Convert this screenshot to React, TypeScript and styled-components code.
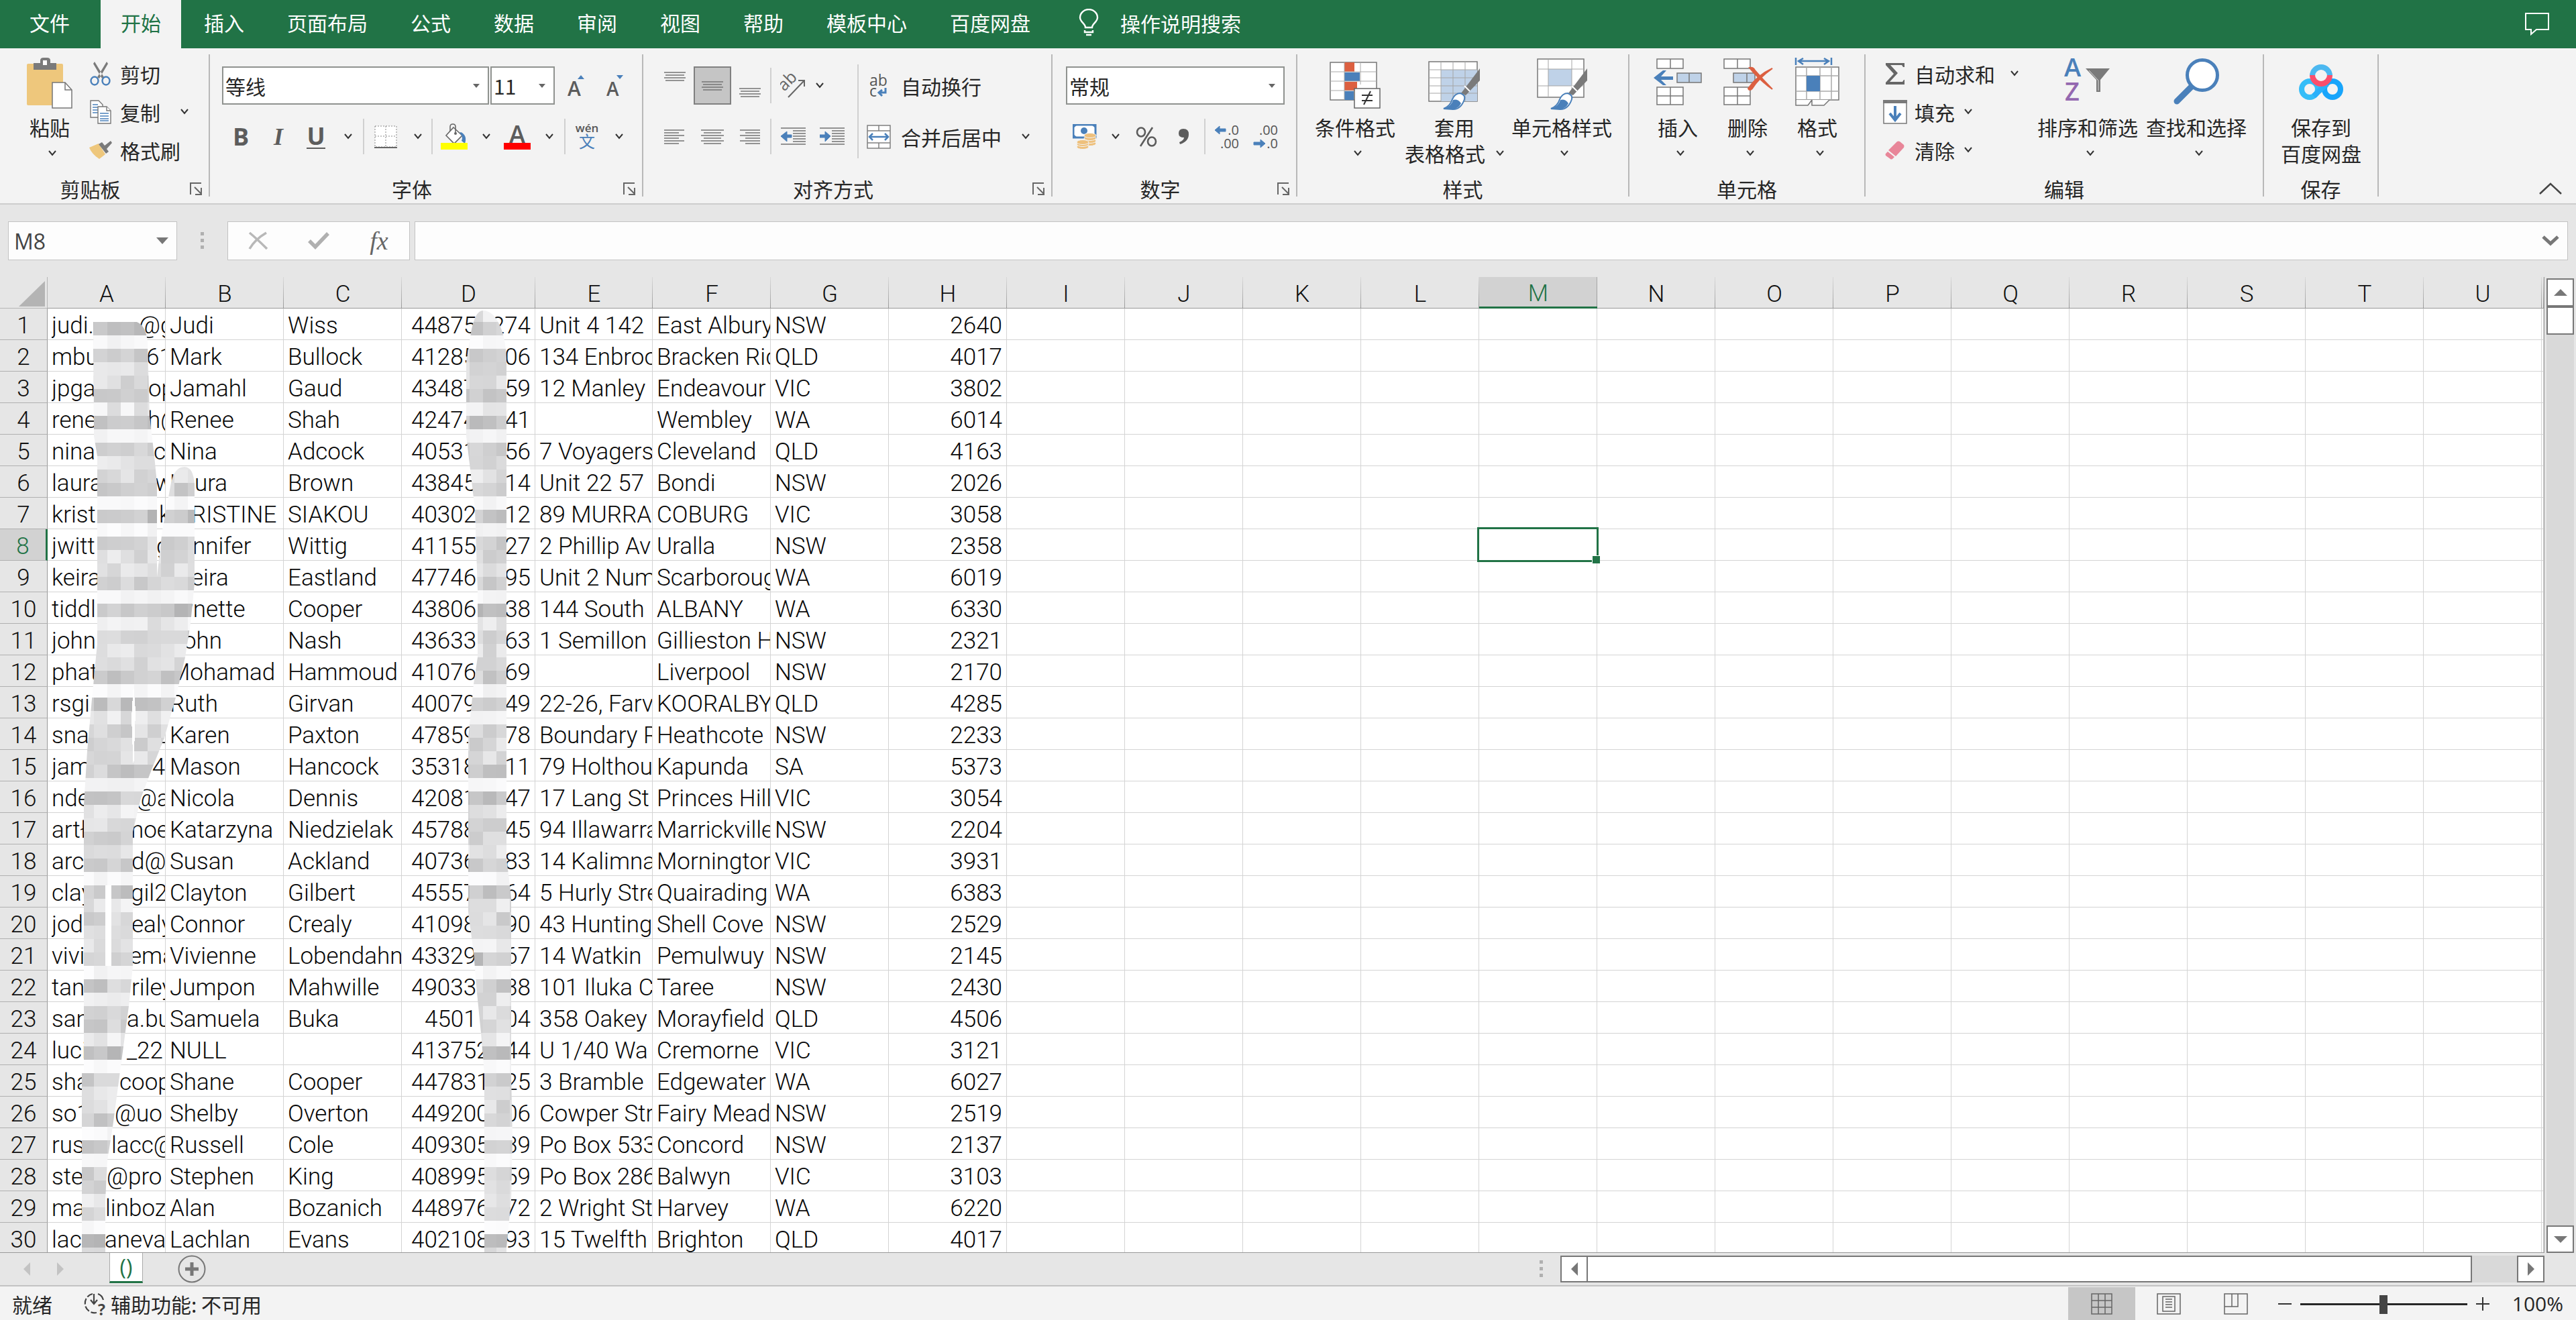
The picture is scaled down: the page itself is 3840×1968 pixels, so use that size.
import React from 'react';
import styled, { createGlobalStyle, css } from 'styled-components';

const GREEN = '#217346';
const BLUE = '#4a80ba';
const GRAY = '#737373';
const UI = '"Noto Sans CJK SC", "Noto Sans", sans-serif';
const SHEET = 'Roboto, "Noto Sans CJK SC", sans-serif';

const GlobalStyle = createGlobalStyle`
  * { box-sizing: border-box; }
  body { margin: 0; background: #e6e6e6; overflow: hidden; }
  button, input, select { font: inherit; color: inherit; border: 0; padding: 0; margin: 0; background: none; }
  svg { display: block; flex: none; }
`;

const Page = styled.div`
  display: flex;
  flex-direction: column;
  height: 100vh;
  font: 30px/40px ${UI};
  color: #262626;
  background: #e6e6e6;
`;

/* ---------- tab strip ---------- */
const TabStrip = styled.nav`
  display: flex;
  flex: none;
  height: 72px;
  background: ${GREEN};
  color: #fff;
`;
const Tab = styled.button<{ $active?: boolean; $wide?: boolean }>`
  padding: 0 ${(p) => (p.$wide ? 44 : 32)}px 6px;
  white-space: nowrap;
  ${(p) => p.$active && css`
    margin: 0 2px;
    padding: 0 30px 6px;
    background: #f3f3f3;
    color: ${GREEN};
  `}
`;
const TellMe = styled.button`
  display: flex;
  align-items: center;
  gap: 32px;
  margin-left: 40px;
  padding-bottom: 4px;
`;
const CommentButton = styled.button`
  margin-left: auto;
  padding: 0 40px;
`;

/* ---------- ribbon ---------- */
const Ribbon = styled.div`
  display: flex;
  flex: none;
  height: 233px;
  padding: 9px 0 10px;
  background: #f3f3f3;
  border-bottom: 2px solid #cdcdcd;
`;
const Group = styled.section<{ $w: number }>`
  display: flex;
  flex-direction: column;
  flex: none;
  width: ${(p) => p.$w}px;
  border-right: 2px solid #b8b8b8;
`;
const GroupBody = styled.div<{ $pad?: number }>`
  display: flex;
  flex: 1;
  min-height: 0;
  padding-left: ${(p) => p.$pad ?? 0}px;
`;
const GroupFooter = styled.div`
  display: flex;
  height: 24px;
  line-height: 24px;
`;
const GroupName = styled.span`
  flex: 1;
  text-align: center;
`;
const Launcher = styled.button`
  width: 42px;
  padding-left: 14px;
`;
const BigButton = styled.button<{ $w: number }>`
  display: flex;
  flex-direction: column;
  align-items: center;
  width: ${(p) => p.$w}px;
  height: 173px;
  padding-top: 5px;
  line-height: 39px;
  white-space: nowrap;
`;
const BigIcon = styled.span`
  display: flex;
  justify-content: center;
  height: 84px;
`;
const Line = styled.span<{ $lone?: boolean }>`
  display: flex;
  align-items: center;
  justify-content: center;
  gap: 16px;
  height: 39px;
  padding-left: ${(p) => (p.$lone ? 8 : 0)}px;
`;
const Stack = styled.div`
  display: flex;
  flex-direction: column;
`;
const SmallRow = styled.div`
  display: flex;
  align-items: center;
  height: 57px;
`;
const SmallButton = styled.button`
  display: flex;
  align-items: center;
  gap: 5px;
  white-space: nowrap;
`;
const IconSlot = styled.span<{ $w: number }>`
  display: flex;
  justify-content: center;
  width: ${(p) => p.$w}px;
`;
const Controls = styled.div<{ $w?: number }>`
  display: flex;
  flex-direction: column;
  gap: 19px;
  padding-top: 18px;
  width: ${(p) => (p.$w ? `${p.$w}px` : 'auto')};
`;
const EditColumn = styled(Stack)`
  width: 230px;
`;
const ToolRow = styled.div`
  display: flex;
  align-items: center;
  height: 57px;
`;
const Tool = styled.button<{ $w?: number; $on?: boolean }>`
  display: flex;
  align-items: center;
  justify-content: center;
  width: ${(p) => p.$w ?? 56}px;
  height: 57px;
  ${(p) => p.$on && css`
    background: #c5c5c5;
    border: 2px solid #808080;
  `}
`;
const Divider = styled.span<{ $tall?: boolean }>`
  flex: none;
  width: 2px;
  height: ${(p) => (p.$tall ? 140 : 53)}px;
  margin: ${(p) => (p.$tall ? '15px 2px 0' : '0 2px')};
  background: #d0d0d0;
`;
const ComboBox = styled.label<{ $w: number }>`
  display: flex;
  align-items: center;
  width: ${(p) => p.$w}px;
  height: 57px;
  margin-right: 2px;
  padding: 0 12px 0 3px;
  background: #fff;
  border: 2px solid #8f928f;
  select {
    flex: 1;
    min-width: 0;
    height: 53px;
    appearance: none;
    outline: 0;
  }
`;
const Glyph = styled.span<{ $serif?: boolean; $line?: boolean }>`
  font: ${(p) => (p.$serif ? 'italic' : 'normal')} 700 36px/40px ${(p) => (p.$serif ? '"Liberation Serif", serif' : '"Open Sans", sans-serif')};
  color: #5c5c5c;
  border-bottom: ${(p) => (p.$line ? '2px solid #5c5c5c' : '0')};
  line-height: ${(p) => (p.$line ? 34 : 40)}px;
`;
const CollapseButton = styled.button`
  align-self: flex-end;
  margin-left: auto;
  padding: 0 20px 2px;
`;

/* ---------- formula bar ---------- */
const FormulaBar = styled.div`
  display: flex;
  flex: none;
  height: 108px;
  padding: 25px 12px 25px;
`;
const Field = styled.div<{ $w?: number }>`
  display: flex;
  align-items: center;
  flex: ${(p) => (p.$w ? 'none' : '1')};
  width: ${(p) => (p.$w ? `${p.$w}px` : 'auto')};
  min-width: 0;
  background: #fdfdfd;
  border: 1px solid #c3c3c3;
  input {
    flex: 1;
    min-width: 0;
    height: 54px;
    padding-left: 8px;
    font: 32px/40px "Open Sans", sans-serif;
    color: #444;
    outline: 0;
  }
  button { padding: 0 12px; }
`;
const FxButtons = styled(Field)`
  margin-right: 7px;
  button {
    display: flex;
    justify-content: center;
    width: 90px;
    padding: 0;
  }
`;
const FxGlyph = styled.span`
  font: italic 38px/40px "Liberation Serif", serif;
  color: #666;
`;
const Grip = styled.span<{ $w: number }>`
  display: flex;
  justify-content: center;
  align-items: center;
  flex: none;
  width: ${(p) => p.$w}px;
`;

/* ---------- sheet ---------- */
const SheetArea = styled.div`
  display: flex;
  flex: 1;
  min-height: 0;
`;
const GridFrame = styled.div`
  position: relative;
  flex: 1;
  min-width: 0;
  overflow: hidden;
  border-right: 1px solid #999;
  border-bottom: 1px solid #999;
`;
const Grid = styled.table`
  width: 100%;
  table-layout: fixed;
  border-collapse: separate;
  border-spacing: 0;
  font: 35px/40px ${SHEET};
  color: #080808;
`;
const ColHead = styled.th<{ $on?: boolean }>`
  height: 47px;
  padding: 5px 0 0;
  font-weight: 300;
  line-height: 39px;
  color: ${(p) => (p.$on ? GREEN : '#111')};
  border-bottom: ${(p) => (p.$on ? `3px solid ${GREEN}` : '1px solid #999')};
  background: linear-gradient(${(p) => (p.$on ? '#aaa, #999' : '#dadada, #999')}) right / 1px 100% no-repeat ${(p) => (p.$on ? '#d2d2d2' : '#e6e6e6')};
`;
const Corner = styled.th`
  padding: 0;
  border-right: 1px solid #b5b5b5;
  border-bottom: 1px solid #b5b5b5;
  background: #e6e6e6;
  svg { margin: 4px 0 0 28px; }
`;
const RowHead = styled.th<{ $on?: boolean }>`
  height: 47px;
  padding: 5px 0 0;
  font-weight: 300;
  color: ${(p) => (p.$on ? GREEN : '#111')};
  background: ${(p) => (p.$on ? '#d2d2d2' : '#e6e6e6')};
  border-right: ${(p) => (p.$on ? `3px solid ${GREEN}` : '1px solid #999')};
  border-bottom: 1px solid #b0b0b0;
`;
const Cell = styled.td<{ $num?: boolean }>`
  height: 47px;
  padding: 5px 6px 0;
  overflow: hidden;
  white-space: pre;
  font-weight: 300;
  text-align: ${(p) => (p.$num ? 'right' : 'left')};
  background: #fff;
  border-right: 1px solid #d4d4d4;
  border-bottom: 1px solid #d4d4d4;
`;
const Split = styled.div`
  display: flex;
  overflow: hidden;
  margin-right: -6px;
`;
const Head = styled.span`
  flex: none;
  overflow: hidden;
`;
const Phone = styled.div<{ $short?: boolean }>`
  display: flex;
  justify-content: space-between;
  width: ${(p) => (p.$short ? 158 : 178)}px;
  margin-left: auto;
`;
const ActiveCell = styled.td`
  position: relative;
  height: 47px;
  padding: 0;
  background: #fff;
  border-right: 1px solid #d4d4d4;
  border-bottom: 1px solid #d4d4d4;
  &::before {
    content: '';
    position: absolute;
    inset: -3px;
    border: 3px solid ${GREEN};
  }
  &::after {
    content: '';
    position: absolute;
    right: -5px;
    bottom: -5px;
    width: 11px;
    height: 11px;
    background: ${GREEN};
    border: solid #fff;
    border-width: 1px 0 0 1px;
  }
`;
const Mosaic = styled.svg`
  position: absolute;
  left: 0;
  top: 47px;
`;
const VScroll = styled.div`
  display: flex;
  flex-direction: column;
  flex: none;
  width: 47px;
  padding: 2px 3px 0;
`;
const VTrack = styled.div`
  flex: 1;
  background: #d9d9d9;
`;
const ScrollKey = styled.button<{ $w: number; $h: number }>`
  display: flex;
  align-items: center;
  justify-content: center;
  flex: none;
  width: ${(p) => p.$w}px;
  height: ${(p) => p.$h}px;
  background: #fff;
  border: 2px solid #777;
`;
const SheetBar = styled.div`
  display: flex;
  align-items: center;
  flex: none;
  height: 50px;
  padding: 0 47px 0 15px;
  border-bottom: 2px solid #c3c3c3;
`;
const NavArrow = styled.button`
  display: flex;
  justify-content: center;
  width: 50px;
`;
const SheetTab = styled.button`
  align-self: flex-start;
  width: 50px;
  height: 45px;
  margin: 0 48px;
  background: #fff;
  color: ${GREEN};
  font: 32px/38px "Open Sans", sans-serif;
  border: 1px solid #aaa;
  border-width: 0 1px 3px;
  border-bottom-color: ${GREEN};
`;
const HScroll = styled.div`
  display: flex;
  flex: none;
  width: 1467px;
  height: 40px;
  background: #d9d9d9;
`;
const HThumb = styled.div`
  flex: 1;
  margin: 0 67px 0 -2px;
  background: #fff;
  border: 2px solid #777;
`;
const Spacer = styled.div`
  flex: 1;
`;
const StatusBar = styled.footer`
  display: flex;
  align-items: center;
  flex: none;
  height: 50px;
  padding: 2px 19px 0 18px;
  background: #f3f3f3;
  white-space: nowrap;
`;
const Access = styled.button`
  display: flex;
  align-items: center;
  gap: 4px;
  margin-left: 47px;
`;
const ViewButton = styled.button<{ $on?: boolean }>`
  display: flex;
  align-items: center;
  justify-content: center;
  width: 100px;
  height: 50px;
  background: ${(p) => (p.$on ? '#c6c6c6' : 'transparent')};
`;
const ZoomRange = styled.input`
  width: 249px;
  height: 30px;
  appearance: none;
  &::-webkit-slider-runnable-track { height: 3px; background: #262626; }
  &::-webkit-slider-thumb {
    appearance: none;
    width: 12px;
    height: 28px;
    margin-top: -12px;
    background: #444;
  }
`;
const Percent = styled.span`
  margin-left: 21px;
  font: 30px/40px "Open Sans", sans-serif;
`;

/* ---------- icons ---------- */
const Chevron = () => (
  <svg width="12" height="9" viewBox="0 0 12 9"><path d="M1 1l5 6 5-6" fill="none" stroke="#333" strokeWidth="2" /></svg>
);
const Triangle = ({ w = 10, h = 6, dir = 'down', color = '#666' }: { w?: number; h?: number; dir?: string; color?: string }) => {
  const d: Record<string, string> = {
    down: `M0 0H${w}L${w / 2} ${h}Z`,
    up: `M0 ${h}H${w}L${w / 2} 0Z`,
    left: `M${w} 0V${h}L0 ${h / 2}Z`,
    right: `M0 0V${h}L${w} ${h / 2}Z`,
  };
  return <svg width={w} height={h}><path d={d[dir]} fill={color} /></svg>;
};
const Lines = ({ rows, w = 34, h, step = 4, top = 1 }: { rows: number[][]; w?: number; h: number; step?: number; top?: number }) => (
  <svg width={w} height={h}>
    {rows.map(([a, b], i) => <path key={i} d={`M${a} ${top + i * step}H${b}`} stroke={GRAY} strokeWidth="1.5" />)}
  </svg>
);
const LauncherIcon = () => (
  <svg width="19" height="19" viewBox="0 0 19 19" fill="none" stroke="#666" strokeWidth="2">
    <path d="M1 18V1H17M7 7l10 10M17 8v10H8" />
  </svg>
);
const Bulb = () => (
  <svg width="30" height="42" viewBox="0 0 30 42" fill="none" stroke="#fff" strokeWidth="2.4">
    <path d="M10 28C10 22 2 20 2 13a13 12 0 0 1 26 0c0 7-8 9-8 15zM9 32v3h12v-3M11 39h8" />
  </svg>
);
const CommentIcon = () => (
  <svg width="36" height="34" viewBox="0 0 36 34" fill="none" stroke="#fff" strokeWidth="2">
    <path d="M1 1H35V25H17L9 32V25H1Z" />
  </svg>
);
const PasteIcon = () => (
  <svg width="70" height="78" viewBox="0 0 70 78">
    <rect x="1" y="9" width="54" height="62" rx="2" fill="#eec77c" />
    <path d="M11 18V8h10V4q0-4 5-4h5q5 0 5 4v4h9v10z" fill="#7a7a7a" />
    <rect x="25" y="4" width="6" height="7" fill="#fff" />
    <path d="M39 37H58L68 48V75H39Z" fill="#fff" stroke="#777" strokeWidth="1.5" />
    <path d="M58 37V48H68" fill="none" stroke="#777" strokeWidth="1.5" />
  </svg>
);
const CutIcon = () => (
  <svg width="32" height="36" viewBox="0 0 32 36">
    <path d="M7 0l14 23-3 2L5 3zM25 0L11 23l3 2L27 3z" fill="#7a7a7a" />
    <g fill="none" stroke={BLUE} strokeWidth="2.4"><ellipse cx="7" cy="28.500" rx="5.500" ry="6" /><ellipse cx="24" cy="28.500" rx="5.500" ry="6" /></g>
  </svg>
);
const CopyIcon = () => (
  <svg width="32" height="36" viewBox="0 0 32 36" fill="#fff" stroke="#777" strokeWidth="1.4">
    <path d="M1 1H13L19 7V26H1Z" />
    <path d="M4 7h8M4 11h8M4 15h8M4 19h8" stroke={BLUE} />
    <path d="M12 10H25L31 16V35H12Z" /><path d="M25 10v6h6" />
    <path d="M15 20h13M15 24h13M15 28h13M15 31h13" stroke={BLUE} />
  </svg>
);
const PainterIcon = () => (
  <svg width="34" height="28" viewBox="0 0 34 28">
    <path d="M0 10L14 4 24 20 15 27Q4 20 0 10z" fill="#eec77c" />
    <path d="M14 5l5-3 4 5 9-7 2 3-8 9 3 4-4 3z" fill="#7a7a7a" />
  </svg>
);
const SizeIcon = ({ up }: { up?: boolean }) => (
  <svg width="26" height="32" viewBox="0 0 26 32">
    <text x="0" y="31" fontFamily="Open Sans" fontWeight="600" fontSize={up ? 30 : 28} fill="#5c5c5c">A</text>
    <path d={up ? 'M20 0l5 6H15z' : 'M15 0h10l-5 6z'} fill={BLUE} />
  </svg>
);
const BorderIcon = () => (
  <svg width="34" height="34" viewBox="0 0 34 34">
    <rect x="1" y="1" width="32" height="31" fill="#fff" stroke="#888" strokeDasharray="2 2" />
    <path d="M17 1V32M1 16H33" stroke="#888" strokeDasharray="2 2" /><path d="M0 33H34" stroke="#666" strokeWidth="2" />
  </svg>
);
const FillIcon = () => (
  <svg width="40" height="40" viewBox="0 0 40 40">
    <path d="M19 6L32 18 20 30 8 18Z" fill="#fff" stroke="#666" strokeWidth="1.600" />
    <path d="M14 11V5q0-4 4-4t4 4v10" fill="none" stroke="#666" strokeWidth="1.600" /><circle cx="22" cy="15" r="2" fill="#666" />
    <path d="M30 13Q40 18 36 30L31 26Q34 20 28 14z" fill={BLUE} />
    <rect x="0" y="29" width="40" height="10" fill="#ff0" />
  </svg>
);
const FontColorIcon = () => (
  <svg width="40" height="40" viewBox="0 0 40 40">
    <text x="20" y="30" textAnchor="middle" fontFamily="Open Sans" fontWeight="600" fontSize="37" fill="#5c5c5c">A</text>
    <rect y="29" width="40" height="10" fill="#f00" />
  </svg>
);
const PinyinIcon = () => (
  <svg width="36" height="40" viewBox="0 0 36 40">
    <text x="18" y="13" textAnchor="middle" fontFamily="Open Sans" fontWeight="600" fontSize="17" fill="#555">wén</text>
    <text x="18" y="36" textAnchor="middle" fontFamily="Noto Sans CJK SC" fontSize="24" fill={BLUE}>文</text>
  </svg>
);
const OrientIcon = () => (
  <svg width="38" height="40" viewBox="0 0 38 40">
    <text x="6" y="29" transform="rotate(-45 6 29)" fontFamily="Open Sans" fontSize="25" fill="#666">ab</text>
    <path d="M12 37L36 12M27 12H36V21" fill="none" stroke="#666" strokeWidth="2" />
  </svg>
);
const IndentIcon = ({ out }: { out?: boolean }) => (
  <svg width="37" height="27" viewBox="0 0 37 27">
    <path d="M0 1H37M18 5H37M18 9H37M18 13H37M18 17H37M18 21H37M0 25H37" stroke={GRAY} strokeWidth="1.5" />
    <path d={out ? 'M0 13L9 6v5h7v4H9v6z' : 'M16 13L8 6v5H0v4h8v6z'} fill={BLUE} stroke={BLUE} />
  </svg>
);
const WrapIcon = () => (
  <svg width="28" height="36" viewBox="0 0 28 36">
    <text x="0" y="18" fontFamily="Open Sans" fontSize="23" fill="#555">ab</text>
    <text x="0" y="34" fontFamily="Open Sans" fontSize="23" fill="#555">c</text>
    <path d="M24 21v7h-9M19 24l-5 4 5 5" fill="none" stroke={BLUE} strokeWidth="3" />
  </svg>
);
const MergeIcon = () => (
  <svg width="36" height="36" viewBox="0 0 36 36">
    <path d="M1 1H35V35H1ZM1 9H35M1 27H35M18 1V9M18 27V35" fill="#fff" stroke="#808080" strokeWidth="1.5" />
    <path d="M5 18H31M9 13L4 18l5 5M27 13l5 5-5 5" fill="none" stroke={BLUE} strokeWidth="2.5" />
  </svg>
);
const MoneyIcon = () => (
  <svg width="36" height="38" viewBox="0 0 36 38">
    <rect x="1" y="1" width="33" height="19" fill="#fff" stroke={BLUE} strokeWidth="3" />
    <path d="M1 1h6L1 6zM34 1h-6l6 5zM1 20h6l-6-5z" fill={BLUE} /><circle cx="17" cy="10" r="5" fill={BLUE} />
    <g fill="#eec07c" stroke="#f3f3f3"><ellipse cx="26" cy="29" rx="9" ry="3.500" /><ellipse cx="26" cy="25" rx="9" ry="3.500" /><ellipse cx="26" cy="21" rx="9" ry="3.500" /><ellipse cx="26" cy="17" rx="9" ry="3.500" />
      <ellipse cx="15" cy="34" rx="9" ry="3.500" /><ellipse cx="15" cy="30" rx="9" ry="3.500" /><ellipse cx="15" cy="27" rx="9" ry="3.500" /></g>
  </svg>
);
const PercentIcon = () => (
  <svg width="32" height="30" viewBox="0 0 32 30" fill="none" stroke="#5c5c5c" strokeWidth="2.600">
    <ellipse cx="8" cy="8" rx="6" ry="6.500" /><ellipse cx="24" cy="22" rx="6" ry="6.500" /><path d="M25 1L7 29" />
  </svg>
);
const CommaIcon = () => (
  <svg width="18" height="24" viewBox="0 0 18 24"><path d="M8 0q8 0 8 8 0 11-13 15l-1-3q7-3 7-7-8 0-8-6 0-7 7-7z" fill="#5c5c5c" /></svg>
);
const DecimalIcon = ({ more }: { more?: boolean }) => (
  <svg width="38" height="38" viewBox="0 0 38 38">
    <g fontFamily="Open Sans" fontSize="20" fill="#555" textAnchor="end">
      <text x="37" y="16">{more ? '.0' : '.00'}</text><text x="37" y="36">{more ? '.00' : '.0'}</text>
    </g>
    <path d={more ? 'M1 9L8 3v4h9v4H8v4z' : 'M18 29l-7-6v4H1v4h10v4z'} fill={BLUE} stroke={BLUE} />
  </svg>
);
const CondIcon = () => (
  <svg width="76" height="78" viewBox="0 0 76 78">
    <path d="M1 7H70V63H1Z" fill="#fff" stroke="#777" strokeWidth="1.5" />
    <rect x="22" y="7" width="15" height="14" fill="#dc6041" /><rect x="22" y="22" width="23" height="13" fill={BLUE} />
    <rect x="22" y="36" width="19" height="13" fill="#dc6041" /><rect x="22" y="50" width="14" height="13" fill={BLUE} />
    <path d="M22 7V63M46 7V40M1 21H70M1 35H70M1 49H40" stroke="#aaa" fill="none" />
    <rect x="37" y="46" width="38" height="29" fill="#fff" stroke="#666" strokeWidth="1.500" />
    <path d="M48 56H64M48 64H64M61 50L51 70" stroke="#333" strokeWidth="2" />
  </svg>
);
const Brush = () => (
  <>
    <path d="M78 16L50 53l7 3L78 34z" fill="#7a7a7a" /><path d="M55 42l8 8" stroke="#fff" strokeWidth="2" />
    <path d="M24 76Q34 72 37 62 41 53 49 53 57 56 55 62 50 77 38 77z" fill="#fff" stroke={BLUE} strokeWidth="2" />
    <path d="M24 76Q36 72 38 63 45 61 50 68 46 76 38 77z" fill={BLUE} />
  </>
);
const TableFmtIcon = () => (
  <svg width="80" height="78" viewBox="0 0 80 78">
    <path d="M2 6H74V65H2Z" fill="#fff" stroke="#777" strokeWidth="1.5" /><path d="M20 18H74V65H20Z" fill="#bfd2e8" />
    <path d="M20 6V65M38 6V65M56 6V65M2 18H74M2 30H74M2 42H74M2 53H74" stroke="#a5a5a5" /><Brush />
  </svg>
);
const CellStyleIcon = () => (
  <svg width="80" height="78" viewBox="0 0 80 78">
    <path d="M4 2H73V59H4Z" fill="#fff" stroke="#777" strokeWidth="1.5" /><path d="M20 17H55V42H20Z" fill="#bfd2e8" />
    <path d="M20 2V59M55 2V59M4 17H73M4 42H73" stroke="#a5a5a5" /><Brush />
  </svg>
);
const InsertIcon = () => (
  <svg width="74" height="74" viewBox="0 0 74 74" fill="#fff" stroke="#777" strokeWidth="1.5">
    <path d="M6 2H45V16H6ZM26 2V16M6 44H45V70H6ZM26 44V70M6 57H45" />
    <path d="M36 23H72V37H36ZM54 23V37" fill="#bfd2e8" />
    <path d="M1 30L15 19h5l-8 9h18v5H12l8 8h-5z" fill={BLUE} stroke="none" />
  </svg>
);
const DeleteIcon = () => (
  <svg width="78" height="74" viewBox="0 0 78 74" fill="#fff" stroke="#777" strokeWidth="1.5">
    <path d="M4 2H43V16H4ZM24 2V16M4 44H43V70H4ZM24 44V70M4 57H43" />
    <path d="M18 23H50V37H18ZM38 23V37" fill="#bfd2e8" />
    <path d="M42 15q6-1 8 4 12 14 26 28-14-10-28-25zM76 16Q56 30 46 46q-4 4-6 0Q54 26 76 16z" fill="#dc6041" stroke="#dc6041" strokeWidth="2" />
  </svg>
);
const FormatIcon = () => (
  <svg width="68" height="76" viewBox="0 0 68 76" fill="#fff" stroke="#777" strokeWidth="1.5">
    <path d="M2 14H66V63H2Z" /><path d="M18 14V63M38 14V63M55 14V63M2 27H66M2 50H66" stroke="#aaa" />
    <rect x="18" y="27" width="20" height="23" fill={BLUE} stroke="none" />
    <path d="M2 63V71H20L26 63M26 63V71H44L52 63" />
    <path d="M2 0V11M55 0V11M7 5H50M13 1L6 5l7 5M44 1l7 4-7 5" stroke={BLUE} strokeWidth="2.500" fill="none" />
  </svg>
);
const SumIcon = () => (
  <svg width="30" height="34" viewBox="0 0 30 34"><path d="M1 1H29V7H27L25 4H8L19 16 7 29H26L28 26H29V33H1V30L13 17 1 4Z" fill="#666" /></svg>
);
const FillDownIcon = () => (
  <svg width="36" height="36" viewBox="0 0 36 36">
    <rect x="1" y="1" width="34" height="34" fill="#fff" stroke="#777" strokeWidth="1.5" /><rect width="36" height="5" fill="#7a7a7a" />
    <path d="M18 9V30M10 20l8 10 8-10" stroke={BLUE} strokeWidth="4" fill="none" />
  </svg>
);
const EraserIcon = () => (
  <svg width="30" height="28" viewBox="0 0 30 28">
    <path d="M18 1q2-1 4 0l6 5q1 2 0 4L16 23 5 14z" fill="#e88699" /><path d="M4 16l10 8-3 3q-2 1-3 0l-7-5q-1-2 0-3z" fill="#e88699" />
  </svg>
);
const SortIcon = () => (
  <svg width="70" height="66" viewBox="0 0 70 66">
    <text x="0" y="28" fontFamily="Open Sans" fontSize="38" fontWeight="600" fill={BLUE}>A</text>
    <text x="1" y="64" fontFamily="Open Sans" fontSize="38" fontWeight="600" fill="#9468b0">Z</text>
    <path d="M32 16H68L54 33V51H48V33Z" fill="#7a7a7a" /><path d="M37 19L51 34V49" stroke="#ddd" fill="none" />
  </svg>
);
const FindIcon = () => (
  <svg width="70" height="70" viewBox="0 0 70 70">
    <path d="M29 42L6 65" stroke={BLUE} strokeWidth="9" strokeLinecap="round" />
    <circle cx="44" cy="26" r="22.500" fill="#fff" stroke={BLUE} strokeWidth="5" />
  </svg>
);
const DiskIcon = () => (
  <svg width="66" height="66" viewBox="0 -10 66 66" fill="none" strokeWidth="8">
    <circle cx="16" cy="37" r="12" stroke="#35bdf8" /><circle cx="50" cy="37" r="12" stroke="#18a5fb" />
    <path d="M22 47L42 29" stroke="#2bb0fa" /><path d="M20 17a13 13 0 0 1 26 0" stroke="#4cb8f0" />
    <path d="M20 16a13 13 0 0 0 26 0" stroke="#fb4e6c" />
  </svg>
);
const Dots = () => (
  <svg width="6" height="26"><path d="M0 0h5v5H0zM0 10h5v5H0zM0 20h5v5H0z" fill="#b0b0b0" /></svg>
);
const AccessIcon = () => (
  <svg width="36" height="36" viewBox="0 0 36 36" fill="none" stroke="#444" strokeWidth="2.2">
    <path d="M13 3A14 14 0 0 0 19 31" strokeDasharray="9 3" /><path d="M21 3q6 2 8 9M15 3V17M10 12l5 6 5-6" />
    <text x="21" y="35" fontFamily="Open Sans" fontWeight="700" fontSize="23" fill="#444" stroke="none">?</text>
  </svg>
);

/* ---------- sheet data ---------- */
type Part = [string, string, number];
type Row = { a: Part; b: string | Part; c: string; d: [string, string]; e: string; f: string; g: string; h: string };
const r = (a: Part, b: string | Part, c: string, d1: string, d2: string, e: string, f: string, g: string, h: string): Row =>
  ({ a, b, c, d: [d1, d2], e, f, g, h });
const rows: Row[] = [
  r(['judi.', '@g', 130], 'Judi', 'Wiss', '44875', '274', 'Unit 4 142', 'East Albury', 'NSW', '2640'),
  r(['mbu', '61', 141], 'Mark', 'Bullock', '41285', '06', '134 Enbroo', 'Bracken Rid', 'QLD', '4017'),
  r(['jpga', 'op', 144], 'Jamahl', 'Gaud', '43487', '59', '12 Manley', 'Endeavour', 'VIC', '3802'),
  r(['rene', 'h@', 143], 'Renee', 'Shah', '42474', '41', '', 'Wembley', 'WA', '6014'),
  r(['nina', 'c', 152], 'Nina', 'Adcock', '40531', '56', '7 Voyagers', 'Cleveland', 'QLD', '4163'),
  r(['laura', 'w', 154], ['L', 'ura', 37], 'Brown', '43845', '14', 'Unit 22 57', 'Bondi', 'NSW', '2026'),
  r(['kristi', 'k', 160], ['', 'RISTINE', 32], 'SIAKOU', '40302', '12', '89 MURRA', 'COBURG', 'VIC', '3058'),
  r(['jwitt', 'g', 156], ['', 'nnifer', 34], 'Wittig', '41155', '27', '2 Phillip Av', 'Uralla', 'NSW', '2358'),
  r(['keira', '', 160], ['', 'eira', 32], 'Eastland', '47746', '95', 'Unit 2 Num', 'Scarboroug', 'WA', '6019'),
  r(['tiddl', '', 160], ['', 'ynette', 18], 'Cooper', '438061', '38', '144 South', 'ALBANY', 'WA', '6330'),
  r(['john', '', 160], ['', 'ohn', 20], 'Nash', '436331', '63', '1 Semillon', 'Gillieston H', 'NSW', '2321'),
  r(['phat', '', 160], 'Mohamad', 'Hammoud', '41076', '69', '', 'Liverpool', 'NSW', '2170'),
  r(['rsgi', '', 160], 'Ruth', 'Girvan', '40079', '49', '22-26, Farv', 'KOORALBY', 'QLD', '4285'),
  r(['sna', 'z', 154], 'Karen', 'Paxton', '47859', '78', 'Boundary R', 'Heathcote', 'NSW', '2233'),
  r(['jam', 'r4', 138], 'Mason', 'Hancock', '35318', '11', '79 Holthou', 'Kapunda', 'SA', '5373'),
  r(['nde', '@a', 125], 'Nicola', 'Dennis', '42081', '47', '17 Lang St', 'Princes Hill', 'VIC', '3054'),
  r(['artł', 'noe', 118], 'Katarzyna', 'Niedzielak', '45788', '45', '94 Illawarra', 'Marrickville', 'NSW', '2204'),
  r(['arc', 'd@', 119], 'Susan', 'Ackland', '40736', '83', '14 Kalimna', 'Mornington', 'VIC', '3931'),
  r(['clay', 'gil2', 118], 'Clayton', 'Gilbert', '45557', '64', '5 Hurly Stre', 'Quairading', 'WA', '6383'),
  r(['jod', 'ealy', 119], 'Connor', 'Crealy', '41098', '90', '43 Hunting', 'Shell Cove', 'NSW', '2529'),
  r(['vivi', 'ema', 116], 'Vivienne', 'Lobendahn', '43329', '67', '14 Watkin', 'Pemulwuy', 'NSW', '2145'),
  r(['tan', 'riley', 119], 'Jumpon', 'Mahwille', '49033', '38', '101 Iluka C', 'Taree', 'NSW', '2430'),
  r(['san', 'a.bu', 112], 'Samuela', 'Buka', '4501', '04', '358 Oakey', 'Morayfield', 'QLD', '4506'),
  r(['luci', '_22', 112], 'NULL', '', '413752', '44', 'U 1/40 Wa', 'Cremorne', 'VIC', '3121'),
  r(['sha', 'coop', 101], 'Shane', 'Cooper', '447831', '25', '3 Bramble', 'Edgewater', 'WA', '6027'),
  r(['so1', '@uo', 94], 'Shelby', 'Overton', '449200', '06', 'Cowper Str', 'Fairy Mead', 'NSW', '2519'),
  r(['rus', 'lacc@', 89], 'Russell', 'Cole', '409305', '39', 'Po Box 533', 'Concord', 'NSW', '2137'),
  r(['ste', '@pro', 82], 'Stephen', 'King', '408995', '59', 'Po Box 286', 'Balwyn', 'VIC', '3103'),
  r(['ma', 'linboz', 80], 'Alan', 'Bozanich', '448976', '72', '2 Wright St', 'Harvey', 'WA', '6220'),
  r(['lac', 'anevar', 79], 'Lachlan', 'Evans', '402108', '93', '15 Twelfth', 'Brighton', 'QLD', '4017'),
];
const cols = 'ABCDEFGHIJKLMNOPQRSTU'.split('');

/* Grey blocks: darker in the bands that cross a line of text. */
const blocks: { x: number; y: number; c: string }[] = [];
for (let y = 0; y < 1420; y += 20) {
  let cover = 0;
  for (let n = 0; n < 30; n++) {
    const t = n * 47 + 18;
    cover = Math.max(cover, Math.min(y + 20, t + 20) - Math.max(y, t));
  }
  for (const x of [100, 120, 140, 160, 180, 200, 220, 240, 260, 280, 680, 700, 720, 740, 760]) {
    const seed = Math.abs(Math.sin(x * 12.9898 + y * 78.233) * 43758.5453) % 1;
    const v = Math.round(252 - Math.max(0, cover) * 2 - seed * (cover > 0 ? 34 : 12));
    blocks.push({ x, y, c: `rgb(${v},${v},${v + 1})` });
  }
}
const MosaicLayer = () => (
  <Mosaic width="800" height="1420" viewBox="0 0 800 1420" aria-hidden="true">
    <defs>
      <clipPath id="strokes">
        <path d="M139 20H204Q218 26 220 50L223 160 230 220 234 260V400L242 330 255 260Q260 236 275 236 288 236 290 262L290 410 284 470 276 520 262 580 245 640 225 690 210 730 198 780V980L192 1040 184 1100 176 1160 168 1220 160 1270 157 1330V1420H122V1140H125V740L130 660 139 560 145 500V220L140 190Z" />
        <path d="M702 36Q708 3 720 3 735 3 745 25 754 45 755 75V820L760 860 762 880V1140L764 1240 762 1330 755 1400V1420H722V1140L717 1080 711 1020 706 960 698 900V640L706 560 712 520V420L708 300 701 240 695 190V80Z" />
      </clipPath>
    </defs>
    <g clipPath="url(#strokes)" shapeRendering="crispEdges">
      {blocks.map((b) => <rect key={`${b.x}-${b.y}`} x={b.x} y={b.y} width="20" height="20" fill={b.c} />)}
      <path d="M157 860h9v120h-9zM199 560l3 40-3 90-3-80z" fill="#fff" />
    </g>
  </Mosaic>
);

const SplitText = ({ part }: { part: Part }) => (
  <Split><Head style={{ width: part[2] }}>{part[0]}</Head><span>{part[1]}</span></Split>
);

const Footer = ({ name, launch }: { name: string; launch?: boolean }) => (
  <GroupFooter>
    <GroupName>{name}</GroupName>
    {launch && <Launcher aria-label={name}><LauncherIcon /></Launcher>}
  </GroupFooter>
);
const Big = ({ w, icon, lines, menu }: { w: number; icon: React.ReactNode; lines: string[]; menu?: boolean }) => (
  <BigButton $w={w}>
    <BigIcon>{icon}</BigIcon>
    <Line>{lines[0]}</Line>
    <Line $lone={!lines[1]}>{lines[1]}{menu && <Chevron />}</Line>
  </BigButton>
);
const Small = ({ icon, slot, text, menu }: { icon: React.ReactNode; slot: number; text: string; menu?: number }) => (
  <SmallRow>
    <SmallButton><IconSlot $w={slot}>{icon}</IconSlot>{text}</SmallButton>
    {menu && <Tool $w={menu} aria-label={text}><Chevron /></Tool>}
  </SmallRow>
);
const Drop = ({ w = 40, label }: { w?: number; label: string }) => <Tool $w={w} aria-label={label}><Chevron /></Tool>;

export default function App() {
  return (
    <Page>
      <GlobalStyle />
      <TabStrip>
        <Tab $wide>文件</Tab>
        <Tab $active>开始</Tab>
        {['插入', '页面布局', '公式', '数据', '审阅', '视图', '帮助', '模板中心', '百度网盘'].map((t) => <Tab key={t}>{t}</Tab>)}
        <TellMe><Bulb />操作说明搜索</TellMe>
        <CommentButton aria-label="批注"><CommentIcon /></CommentButton>
      </TabStrip>

      <Ribbon>
        <Group $w={313}>
          <GroupBody $pad={22}>
            <Big w={104} icon={<PasteIcon />} lines={['粘贴', '']} menu />
            <Stack>
              <Small slot={48} icon={<CutIcon />} text="剪切" />
              <Small slot={48} icon={<CopyIcon />} text="复制" menu={72} />
              <Small slot={48} icon={<PainterIcon />} text="格式刷" />
            </Stack>
          </GroupBody>
          <Footer name="剪贴板" launch />
        </Group>

        <Group $w={646}>
          <GroupBody $pad={18}>
            <Controls>
              <ToolRow>
                <ComboBox $w={398}><select aria-label="字体"><option>等线</option></select><Triangle /></ComboBox>
                <ComboBox $w={96}><select aria-label="字号"><option>11</option></select><Triangle /></ComboBox>
                <Tool $w={60} aria-label="增大字号"><SizeIcon up /></Tool>
                <Tool aria-label="减小字号"><SizeIcon /></Tool>
              </ToolRow>
              <ToolRow>
                <Tool><Glyph>B</Glyph></Tool>
                <Tool><Glyph $serif>I</Glyph></Tool>
                <Tool><Glyph $line>U</Glyph></Tool>
                <Drop label="下划线" />
                <Divider />
                <Tool $w={60} aria-label="边框"><BorderIcon /></Tool><Drop w={36} label="边框选项" />
                <Divider />
                <Tool $w={60} aria-label="填充颜色"><FillIcon /></Tool><Drop w={36} label="填充颜色选项" />
                <Tool $w={56} aria-label="字体颜色"><FontColorIcon /></Tool><Drop w={40} label="字体颜色选项" />
                <Divider />
                <Tool $w={60} aria-label="拼音"><PinyinIcon /></Tool><Drop w={36} label="拼音选项" />
              </ToolRow>
            </Controls>
          </GroupBody>
          <Footer name="字体" launch />
        </Group>

        <Group $w={610}>
          <GroupBody $pad={19}>
            <Controls $w={298}>
              <ToolRow>
                <Tool aria-label="顶端对齐"><Lines rows={[[0, 32], [2, 30], [0, 32], [2, 30]]} w={32} h={50} top={5} /></Tool>
                <Tool $on aria-label="垂直居中"><Lines rows={[[0, 32], [2, 30], [0, 32], [2, 30]]} w={32} h={14} /></Tool>
                <Tool aria-label="底端对齐"><Lines rows={[[0, 32], [2, 30], [0, 32], [2, 30]]} w={32} h={48} top={28} /></Tool>
                <Divider />
                <Tool $w={60} aria-label="方向"><OrientIcon /></Tool><Drop w={20} label="方向选项" />
              </ToolRow>
              <ToolRow>
                <Tool aria-label="左对齐"><Lines rows={[[0, 30], [0, 22], [0, 30], [0, 22], [0, 30], [0, 22]]} w={32} h={22} /></Tool>
                <Tool aria-label="居中"><Lines rows={[[0, 34], [4, 30], [0, 34], [4, 30], [0, 34], [4, 30]]} w={34} h={22} /></Tool>
                <Tool aria-label="右对齐"><Lines rows={[[1, 31], [9, 31], [1, 31], [9, 31], [1, 31], [9, 31]]} w={32} h={22} /></Tool>
                <Divider />
                <Tool $w={60} aria-label="减少缩进量"><IndentIcon out /></Tool>
                <Tool aria-label="增加缩进量"><IndentIcon /></Tool>
              </ToolRow>
            </Controls>
            <Divider $tall />
            <Controls>
              <Small slot={56} icon={<WrapIcon />} text="自动换行" />
              <Small slot={56} icon={<MergeIcon />} text="合并后居中" menu={72} />
            </Controls>
          </GroupBody>
          <Footer name="对齐方式" launch />
        </Group>

        <Group $w={365}>
          <GroupBody $pad={20}>
            <Controls>
              <ToolRow>
                <ComboBox $w={326}><select aria-label="数字格式"><option>常规</option></select><Triangle /></ComboBox>
              </ToolRow>
              <ToolRow>
                <Tool aria-label="会计数字格式"><MoneyIcon /></Tool><Drop w={36} label="会计数字格式选项" />
                <Tool aria-label="百分比"><PercentIcon /></Tool>
                <Tool aria-label="千位分隔"><CommaIcon /></Tool>
                <Divider />
                <Tool $w={60} aria-label="增加小数位数"><DecimalIcon more /></Tool>
                <Tool aria-label="减少小数位数"><DecimalIcon /></Tool>
              </ToolRow>
            </Controls>
          </GroupBody>
          <Footer name="数字" launch />
        </Group>

        <Group $w={495}>
          <GroupBody $pad={16}>
            <Big w={140} icon={<CondIcon />} lines={['条件格式', '']} menu />
            <Big w={156} icon={<TableFmtIcon />} lines={['套用', '表格格式']} menu />
            <Big w={164} icon={<CellStyleIcon />} lines={['单元格样式', '']} menu />
          </GroupBody>
          <Footer name="样式" />
        </Group>

        <Group $w={352}>
          <GroupBody $pad={20}>
            <Big w={104} icon={<InsertIcon />} lines={['插入', '']} menu />
            <Big w={104} icon={<DeleteIcon />} lines={['删除', '']} menu />
            <Big w={104} icon={<FormatIcon />} lines={['格式', '']} menu />
          </GroupBody>
          <Footer name="单元格" />
        </Group>

        <Group $w={594}>
          <GroupBody $pad={20}>
            <EditColumn>
              <Small slot={48} icon={<SumIcon />} text="自动求和" menu={72} />
              <Small slot={48} icon={<FillDownIcon />} text="填充" menu={40} />
              <Small slot={48} icon={<EraserIcon />} text="清除" menu={40} />
            </EditColumn>
            <Big w={162} icon={<SortIcon />} lines={['排序和筛选', '']} menu />
            <Big w={162} icon={<FindIcon />} lines={['查找和选择', '']} menu />
          </GroupBody>
          <Footer name="编辑" />
        </Group>

        <Group $w={171}>
          <GroupBody $pad={5}>
            <Big w={160} icon={<DiskIcon />} lines={['保存到', '百度网盘']} />
          </GroupBody>
          <Footer name="保存" />
        </Group>
        <CollapseButton aria-label="折叠功能区">
          <svg width="36" height="19"><path d="M2 17L18 2 34 17" fill="none" stroke="#444" strokeWidth="2.5" /></svg>
        </CollapseButton>
      </Ribbon>

      <FormulaBar>
        <Field $w={252}>
          <input aria-label="名称框" defaultValue="M8" />
          <button aria-label="名称列表"><Triangle w={18} h={10} color="#777" /></button>
        </Field>
        <Grip $w={75}><Dots /></Grip>
        <FxButtons $w={272}>
          <button aria-label="取消"><svg width="30" height="28" viewBox="0 0 30 28"><path d="M2 2Q14 12 28 26M27 2Q10 12 2 26" fill="none" stroke="#b8b8b8" strokeWidth="3.500" /></svg></button>
          <button aria-label="输入"><svg width="32" height="26" viewBox="0 0 32 26"><path d="M2 13l9 9L30 2" fill="none" stroke="#b0b0b0" strokeWidth="5.500" /></svg></button>
          <button aria-label="插入函数"><FxGlyph>fx</FxGlyph></button>
        </FxButtons>
        <Field>
          <input aria-label="编辑栏" />
          <button aria-label="展开编辑栏">
            <svg width="26" height="18"><path d="M2 3L13 13 24 3" fill="none" stroke="#777" strokeWidth="5" /></svg>
          </button>
        </Field>
      </FormulaBar>

      <SheetArea>
        <GridFrame>
          <Grid>
            <colgroup>
              <col style={{ width: 71 }} />
              {cols.map((c) => <col key={c} style={{ width: c === 'D' ? 199 : c === 'E' ? 175 : 176 }} />)}
              <col />
            </colgroup>
            <thead>
              <tr>
                <Corner><svg width="39" height="38"><path d="M39 0V38H0Z" fill="#b4b4b4" /></svg></Corner>
                {cols.map((c) => <ColHead key={c} scope="col" $on={c === 'M'}>{c}</ColHead>)}
                <ColHead aria-label="V" />
              </tr>
            </thead>
            <tbody>
              {rows.map((row, i) => (
                <tr key={i}>
                  <RowHead scope="row" $on={i === 7}>{i + 1}</RowHead>
                  <Cell><SplitText part={row.a} /></Cell>
                  <Cell>{typeof row.b === 'string' ? row.b : <SplitText part={row.b} />}</Cell>
                  <Cell>{row.c}</Cell>
                  <Cell><Phone $short={i === 22}><span>{row.d[0]}</span><span>{row.d[1]}</span></Phone></Cell>
                  <Cell>{row.e}</Cell>
                  <Cell>{row.f}</Cell>
                  <Cell>{row.g}</Cell>
                  <Cell $num>{row.h}</Cell>
                  {cols.slice(8).map((c) => (c === 'M' && i === 7 ? <ActiveCell key={c} /> : <Cell key={c} />))}
                  <Cell />
                </tr>
              ))}
            </tbody>
          </Grid>
          <MosaicLayer />
        </GridFrame>
        <VScroll>
          <ScrollKey $w={41} $h={42} aria-label="向上"><Triangle w={20} h={10} dir="up" color="#777" /></ScrollKey>
          <ScrollKey $w={41} $h={42} aria-label="滚动块" />
          <VTrack />
          <ScrollKey $w={41} $h={41} aria-label="向下"><Triangle w={20} h={10} color="#777" /></ScrollKey>
        </VScroll>
      </SheetArea>

      <SheetBar>
        <NavArrow aria-label="上一个"><Triangle w={10} h={20} dir="left" color="#c3c3c3" /></NavArrow>
        <NavArrow aria-label="下一个"><Triangle w={10} h={20} dir="right" color="#c3c3c3" /></NavArrow>
        <SheetTab>()</SheetTab>
        <NavArrow aria-label="新工作表">
          <svg width="42" height="42" viewBox="0 0 42 42" fill="none" stroke="#777"><circle cx="21" cy="21" r="19.500" strokeWidth="2" /><path d="M21 11V31M11 21H31" strokeWidth="5" /></svg>
        </NavArrow>
        <Spacer />
        <Grip $w={56}><Dots /></Grip>
        <HScroll>
          <ScrollKey $w={41} $h={40} aria-label="向左"><Triangle w={10} h={20} dir="left" color="#777" /></ScrollKey>
          <HThumb />
          <ScrollKey $w={41} $h={40} aria-label="向右"><Triangle w={10} h={20} dir="right" color="#777" /></ScrollKey>
        </HScroll>
      </SheetBar>

      <StatusBar>
        <span>就绪</span>
        <Access><AccessIcon />辅助功能: 不可用</Access>
        <Spacer />
        <ViewButton $on aria-label="普通"><svg width="32" height="32" fill="none" stroke="#666" strokeWidth="1.500"><path d="M1 1H31V31H1ZM11 1V31M21 1V31M1 11H31M1 21H31" /></svg></ViewButton>
        <ViewButton aria-label="页面布局"><svg width="36" height="32" fill="none" stroke="#666" strokeWidth="1.500"><path d="M1 1H35V31H1ZM9 5H27V27H9ZM13 9H23M13 13H23M13 17H23M13 21H23" /></svg></ViewButton>
        <ViewButton aria-label="分页预览"><svg width="36" height="32" fill="none" stroke="#666" strokeWidth="1.500"><path d="M1 1H35V31H1ZM12 1V20M21 1V20H1" /></svg></ViewButton>
        <Tool $w={46} aria-label="缩小"><svg width="20" height="20"><path d="M0 10H20" stroke="#333" strokeWidth="2" /></svg></Tool>
        <ZoomRange type="range" aria-label="缩放" min="10" max="190" defaultValue="100" />
        <Tool $w={46} aria-label="放大"><svg width="20" height="20"><path d="M0 10H20M10 0V20" stroke="#333" strokeWidth="2" /></svg></Tool>
        <Percent>100%</Percent>
      </StatusBar>
    </Page>
  );
}
